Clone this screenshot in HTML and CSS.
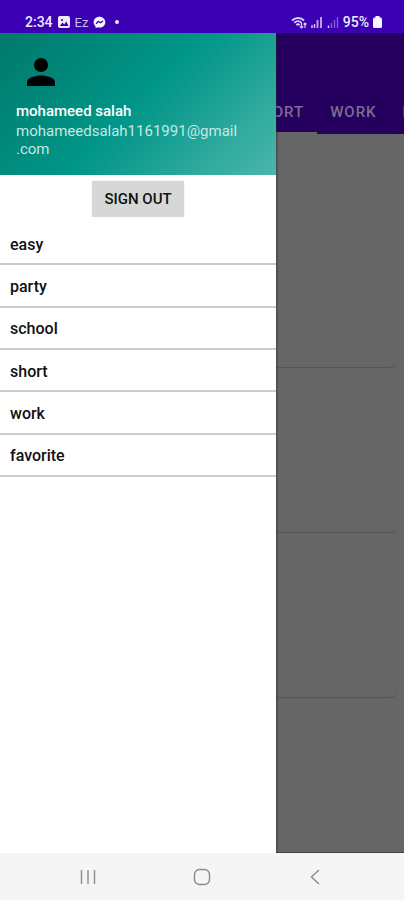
FILE: index.html
```
<!DOCTYPE html>
<html lang="en">
<head>
<meta charset="utf-8">
<meta name="viewport" content="width=device-width, initial-scale=1">
<title>Categories</title>
<link rel="stylesheet" href="styles.css">
</head>
<body>
<header class="status">
  <div class="status-group">
    <span class="clock">2:34</span>
    <svg class="picture-icon" viewBox="0 0 12 12" aria-hidden="true"><rect width="12" height="12" rx="2" fill="#f1eaff"/><circle cx="4" cy="4" r="1.1" fill="#3b00b4"/><path d="M1.8 10 4.5 6.5 6.2 8.4 8.3 5.5 10.5 10z" fill="#3b00b4"/></svg>
    <span class="carrier">Ez</span>
    <svg class="messenger-icon" viewBox="0 0 14 14" aria-hidden="true"><path d="M7 .8C3.300.8.7 3.300.7 6.800c0 1.900.8 3.400 2.100 4.500v2l2-1.100c.7.2 1.400.3 2.200.3 3.700 0 6.300-2.500 6.300-5.700S10.700.8 7 .8z" fill="#f8f4ff"/><path d="m3.300 8.300 2.500-2.600 2 1.600 2.900-1.800" fill="none" stroke="#3b00b4" stroke-width="1.400"/></svg>
    <span class="dot"></span>
  </div>
  <div class="status-group status-right">
    <svg class="wifi-icon" viewBox="0 0 16 13" aria-hidden="true"><path d="M1 4.500C4.500 1.200 10 1.200 13 4.500M3.300 6.800c2.300-2 5.200-2 7.200 0M5.300 9c1.200-1 2.400-1 3.400 0" fill="none" stroke="#d9ccf5" stroke-width="1.900"/><path d="M10.500 7v5M8.800 10.300l1.700 1.700 1.700-1.700M14 12V7M12.500 8.500 14 7l1.500 1.500" fill="none" stroke="#d9ccf5" stroke-width="1.200"/></svg>
    <svg class="signal-icon" viewBox="0 0 12 12" aria-hidden="true"><path d="M1 9v3M3.500 8v4" stroke="#d9ccf5" stroke-width="1.400"/><path d="M6.500 4v8M10 1v11" stroke="#b89ee9" stroke-width="2"/></svg>
    <svg class="signal-icon" viewBox="0 0 12 12" aria-hidden="true"><path d="M1.500 9.500V12" stroke="#d9ccf5" stroke-width="1.500"/><path d="M4.500 7v5M7.500 4v8M10.500 1v11" stroke="#8058cf" stroke-width="1.500"/></svg>
    <span class="battery-level">95%</span>
    <svg class="battery-icon" viewBox="0 0 9 12" aria-hidden="true"><path d="M2.500 0h4v1.500h1Q9 1.500 9 3v7.500Q9 12 7.500 12h-6Q0 12 0 10.500V3q0-1.500 1.500-1.500h1z" fill="#f8f4ff"/></svg>
  </div>
</header>

<div class="stage">
  <main class="page">
    <nav class="tabs">
      <a class="tab active" href="#short">SHORT</a>
      <a class="tab" href="#work">WORK</a>
      <a class="tab" href="#favorite">FAVORITE</a>
    </nav>
    <div class="cards">
      <div class="card search"></div>
      <div class="card"></div>
      <div class="card"></div>
      <div class="card"></div>
      <div class="card last"></div>
    </div>
  </main>

  <aside class="drawer">
    <section class="profile">
      <svg class="avatar" viewBox="0 0 28 28" aria-hidden="true"><circle cx="14" cy="7" r="7"/><path d="M0 28v-3.500C0 19.500 8 17.500 14 17.500s14 2 14 7V28z"/></svg>
      <div class="name">mohameed salah</div>
      <div class="email">mohameedsalah1161991@gmail<wbr>.com</div>
    </section>
    <button class="sign-out" type="button">SIGN OUT</button>
    <nav class="menu">
      <a href="#easy">easy</a>
      <a href="#party">party</a>
      <a href="#school">school</a>
      <a href="#short">short</a>
      <a href="#work">work</a>
      <a href="#favorite">favorite</a>
    </nav>
  </aside>
</div>

<footer class="system-nav">
  <button type="button" aria-label="Recent apps"><svg viewBox="0 0 18 18" aria-hidden="true"><path d="M2.500 2v14M9 2v14M15.500 2v14"/></svg></button>
  <button type="button" aria-label="Home"><svg viewBox="0 0 18 18" aria-hidden="true"><rect x="1.500" y="1.500" width="15" height="15" rx="5"/></svg></button>
  <button type="button" aria-label="Back"><svg viewBox="0 0 18 18" aria-hidden="true"><path d="M12 2 4.500 9l7.500 7"/></svg></button>
</footer>
</body>
</html>
```
FILE: styles.css
```
* {
  box-sizing: border-box;
}

body {
  margin: 0;
  min-height: 100vh;
  display: flex;
  flex-direction: column;
  font-family: Roboto, "Liberation Sans", sans-serif;
  font-size: 15px;
  background: #fff;
  color: #111;
}

a {
  color: inherit;
  text-decoration: none;
}

svg {
  display: block;
  flex: none;
}

.status {
  height: 33px;
  padding: 11px 22px 0 25px;
  display: flex;
  justify-content: space-between;
  background: #3b00b4;
  color: #f1eaff;
}

.status-group {
  height: 22px;
  display: flex;
  align-items: center;
  gap: 5px;
}

.status-right {
  gap: 4px;
}

.clock,
.battery-level {
  font-size: 14px;
  font-weight: 500;
}

.carrier {
  font-size: 13px;
  color: #cdbcf2;
}

.picture-icon {
  width: 12px;
  height: 12px;
}

.messenger-icon {
  width: 13px;
  height: 13px;
}

.dot {
  width: 4px;
  height: 4px;
  margin-left: 4px;
  border-radius: 50%;
  background: #f1eaff;
}

.wifi-icon {
  width: 16px;
  height: 13px;
}

.signal-icon {
  width: 12px;
  height: 12px;
}

.battery-icon {
  width: 9px;
  height: 12px;
}

.stage {
  flex: 1;
  display: grid;
  grid-template-columns: minmax(0, 1fr);
}

.page,
.drawer {
  grid-area: 1 / 1;
}

.page {
  display: flex;
  flex-direction: column;
  overflow: hidden;
  background: #666;
  border-bottom: 1px solid #444;
}

.tabs {
  height: 101px;
  padding-left: 238px;
  display: flex;
  align-items: flex-end;
  overflow: hidden;
  background: #25005f;
  color: #7d6c91;
  font-weight: 500;
  letter-spacing: 1px;
}

.tab {
  height: 44px;
  padding: 0 13px;
  line-height: 44px;
  border-bottom: 2px solid transparent;
}

.tab.active {
  border-color: #666;
}

.cards {
  flex: 1;
  padding: 2px 8px 0;
  display: flex;
  flex-direction: column;
  gap: 8px;
}

.card {
  height: 157px;
  border-radius: 5px;
  background: #666;
  box-shadow: 0 1px 1px #565656;
}

.search {
  height: 66px;
  box-shadow: 0 0 1px #5e5e5e;
}

.last {
  height: auto;
  flex: 1;
  border-radius: 5px 5px 0 0;
}

.drawer {
  z-index: 1;
  width: 276px;
  display: flex;
  flex-direction: column;
  background: #fff;
  box-shadow: 0 0 3px #222;
  clip-path: inset(0 -8px 0 0);
}

.profile {
  height: 142px;
  padding: 25px 16px 0;
  background: linear-gradient(135deg, #00796b, #009688 50%, #4db6ac);
}

.avatar {
  width: 28px;
  height: 28px;
  margin: 0 0 15px 11px;
  fill: #000;
}

.name {
  line-height: 20px;
  font-weight: 500;
  color: #fff;
}

.email {
  line-height: 18px;
  margin-top: 1px;
  color: #c5e8e4;
}

.sign-out {
  align-self: center;
  width: 92px;
  height: 36px;
  margin: 6px 0;
  padding: 0;
  border: 0;
  border-radius: 2px;
  background: #d6d8d7;
  box-shadow: 0 0 1px #bbb;
  color: #111;
  font: 500 15px Roboto, "Liberation Sans", sans-serif;
}

.menu {
  height: 254px;
  display: grid;
  grid-auto-rows: 1fr;
}

.menu a {
  display: flex;
  align-items: center;
  padding: 2px 10px 0;
  border-bottom: 2px solid #ccc;
  font-size: 16px;
  font-weight: 500;
}

.system-nav {
  height: 47px;
  padding: 0 31px;
  display: flex;
  background: #f5f5f5;
}

.system-nav button {
  flex: 1;
  display: grid;
  place-items: center;
  padding: 0;
  border: 0;
  background: none;
}

.system-nav svg {
  width: 18px;
  height: 18px;
  fill: none;
  stroke: #8b8b8b;
  stroke-width: 1.400;
}
```
